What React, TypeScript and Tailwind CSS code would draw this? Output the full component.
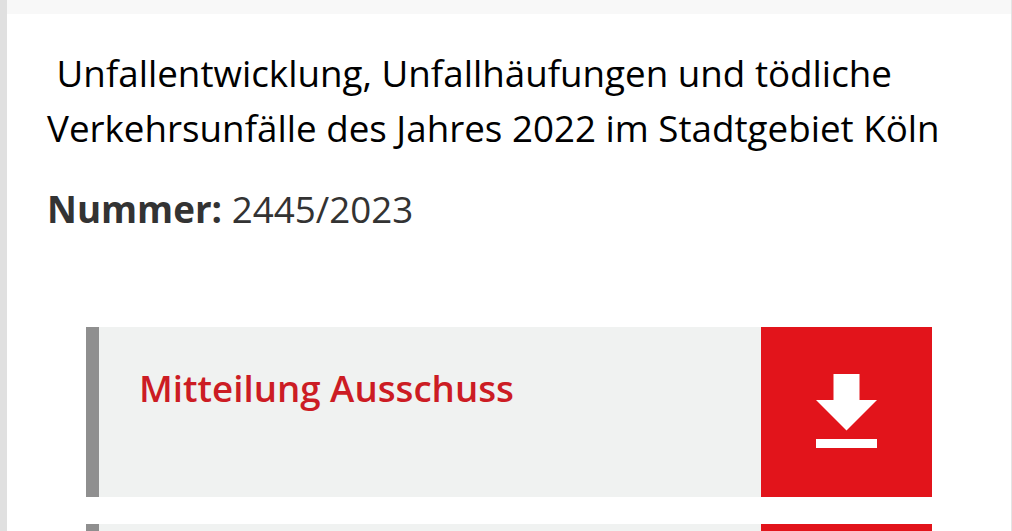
const documents = ["Mitteilung Ausschuss", ""];

function DownloadIcon() {
  return (
    <svg viewBox="0 0 61 74" className="h-[74px] w-[61px] fill-white">
      <path d="M17.500 0h26v26H61L30.500 56.500 0 26h17.500zM0 65h61v9H0z" />
    </svg>
  );
}

function DownloadCard({ title }: { title: string }) {
  return (
    <a className="flex h-[170px] w-[846px] shrink-0 border-l-[13px] border-[#8f8f8f] bg-[#f0f2f1]">
      <span className="flex-1 pl-10 pt-[34px] text-[36.700px] leading-[54px] font-semibold text-[#cc1c24]">
        {title}
      </span>
      <span className="flex w-[171px] items-center justify-center bg-[#e2141b] pb-[2px]">
        <DownloadIcon />
      </span>
    </a>
  );
}

export default function App() {
  return (
    <div className="h-[531px] w-[1012px] overflow-hidden border-r border-l-[7px] border-l-[#e0e0e0] border-r-[#e4e4e4] bg-[#f8f8f8] pt-[14px] font-['Open_Sans',sans-serif]">
      <main className="h-[517px] overflow-hidden bg-white pl-10">
        <h1 className="pt-8 text-[36.750px] leading-[55px] whitespace-pre text-black">
          {" Unfallentwicklung, Unfallhäufungen und tödliche\nVerkehrsunfälle des Jahres 2022 im Stadtgebiet Köln"}
        </h1>
        <p className="pt-[26px] text-[36.750px] leading-[54px] text-[#333]">
          <strong className="font-bold">Nummer:</strong> 2445/2023
        </p>
        <div className="flex flex-col gap-[27px] pt-[91px] pl-[39px]">
          {documents.map((title, i) => (
            <DownloadCard key={i} title={title} />
          ))}
        </div>
      </main>
    </div>
  );
}
